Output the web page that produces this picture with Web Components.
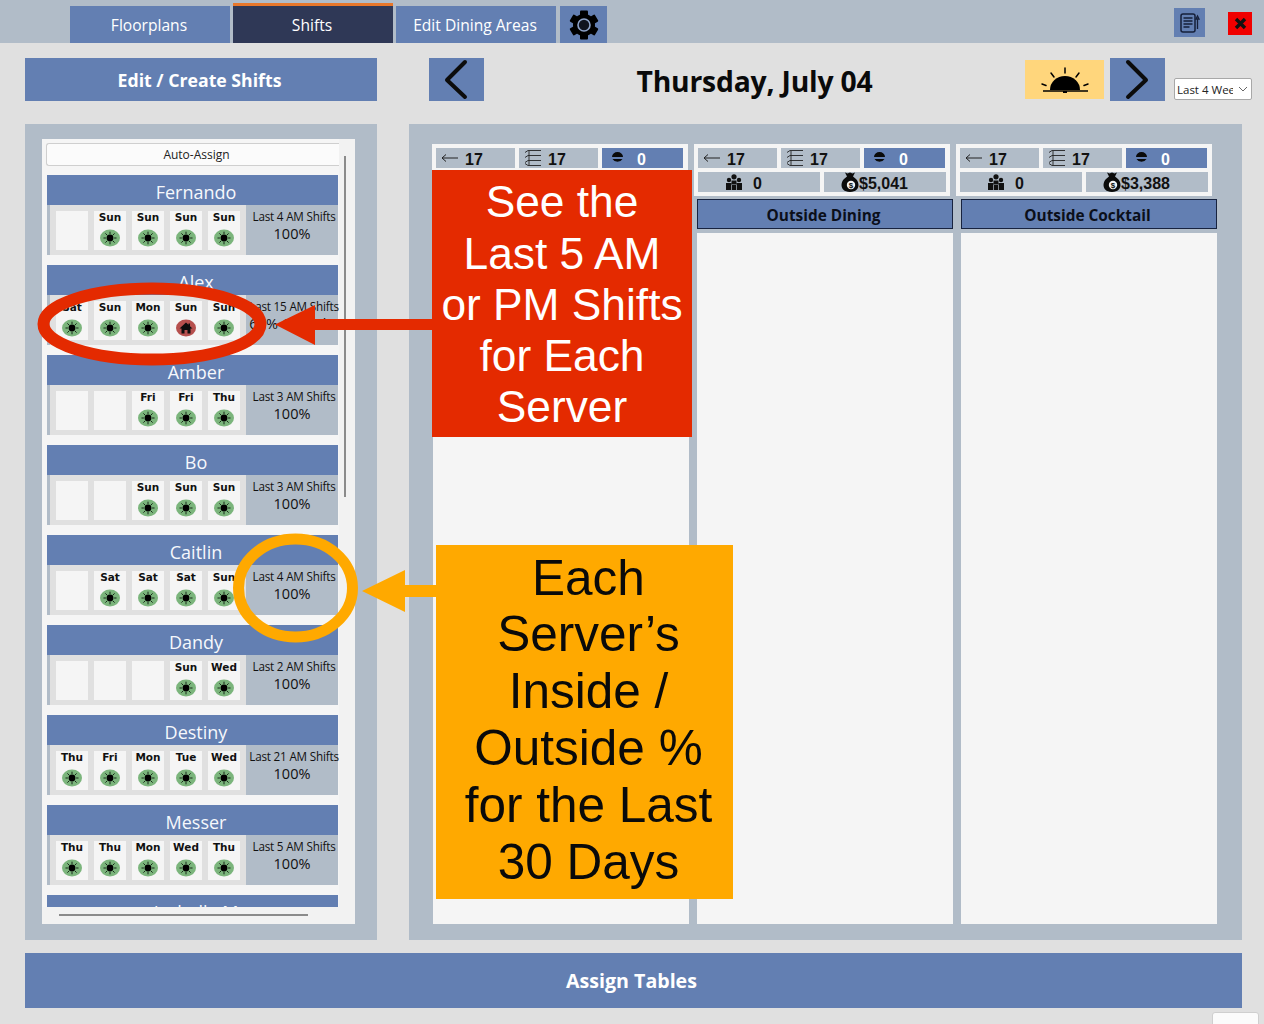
<!DOCTYPE html>
<html>
<head>
<meta charset="utf-8">
<title>Shifts</title>
<style>
  html, body { margin: 0; height: 1024px; overflow: hidden; }
  body { position: relative; background: #e0e0e0; font-family: "Open Sans", "Liberation Sans", sans-serif; }
</style>
</head>
<body>
<top-nav>
  <nav-tab>Floorplans</nav-tab>
  <nav-tab active>Shifts</nav-tab>
  <nav-tab>Edit Dining Areas</nav-tab>
  <gear-button></gear-button>
</top-nav>
<date-toolbar title-text="Thursday, July 04" range="Last 4 Weeks"></date-toolbar>
<main-area>
  <server-panel slot="left"></server-panel>
  <floor-panel slot="right"></floor-panel>
</main-area>
<assign-bar>Assign Tables</assign-bar>
<corner-tab></corner-tab>

<annotation-overlay></annotation-overlay>
<note-callout kind="red">See the<br>Last 5 AM<br>or PM Shifts<br>for Each<br>Server</note-callout>
<note-callout kind="orange">Each<br>Server’s<br>Inside /<br>Outside %<br>for the Last<br>30 Days</note-callout>

<script>
const BLUE = '#637fb2';
const GREY = '#b1bcc8';

class TopNav extends HTMLElement {
  connectedCallback() {
    this.attachShadow({ mode: 'open' });
    this.shadowRoot.innerHTML = `
      <style>
        :host { display: flex; height: 43px; box-sizing: border-box; background: ${GREY}; padding: 0 12px 0 70px; align-items: flex-end; }
        .tabs { display: flex; gap: 3px; align-items: flex-end; }
        .right { margin-left: auto; display: flex; align-items: flex-start; gap: 23px; align-self: flex-start; padding-top: 8px; }
        .note { width: 31px; height: 29px; background: ${BLUE}; display: flex; align-items: center; justify-content: center; }
        .close { width: 24px; height: 23px; margin-top: 4px; background: #f00000; display: flex; align-items: center; justify-content: center; }
      </style>
      <div class="tabs"><slot></slot></div>
      <div class="right">
        <div class="note">
          <svg width="22" height="22" viewBox="0 0 22 22" fill="none" stroke="#16203a" stroke-width="1.5">
            <rect x="2" y="2" width="14" height="18" rx="2"/>
            <path d="M4.500 6h9M4.500 9h9M4.500 12h9M4.500 15h6"/>
            <path d="M18.500 7v10M17 7l1.500-3 1.500 3z" stroke-width="1.300"/>
          </svg>
        </div>
        <div class="close">
          <svg width="13" height="13" viewBox="0 0 13 13"><path d="M2 2l9 9M11 2l-9 9" stroke="#111" stroke-width="3.400"/></svg>
        </div>
      </div>`;
  }
}

class NavTab extends HTMLElement {
  connectedCallback() {
    this.attachShadow({ mode: 'open' });
    this.shadowRoot.innerHTML = `
      <style>
        :host { display: flex; width: 160px; height: 37px; padding-right: 2px; background: ${BLUE}; color: #fff; font-size: 15.600px; align-items: center; justify-content: center; box-sizing: border-box; }
        :host([active]) { height: 40px; background: #2f3856; border-top: 3px solid #e8772a; }
      </style>
      <slot></slot>`;
  }
}

class GearButton extends HTMLElement {
  connectedCallback() {
    this.attachShadow({ mode: 'open' });
    this.shadowRoot.innerHTML = `
      <style>
        :host { display: flex; width: 47px; height: 37px; margin-left: 1px; background: ${BLUE}; align-items: center; justify-content: center; }
      </style>
      <svg width="30" height="30" viewBox="-15 -15 30 30">
        <circle r="11"/>
        <g>
          <rect x="-4" y="-14.500" width="8" height="29" rx="1"/>
          <rect x="-4" y="-14.500" width="8" height="29" rx="1" transform="rotate(60)"/>
          <rect x="-4" y="-14.500" width="8" height="29" rx="1" transform="rotate(120)"/>
        </g>
        <circle r="6" fill="#10141f" stroke="#8ea3c8" stroke-width="1.600"/>
      </svg>`;
  }
}

class DateToolbar extends HTMLElement {
  connectedCallback() {
    this.attachShadow({ mode: 'open' });
    this.shadowRoot.innerHTML = `
      <style>
        :host { display: flex; height: 43px; margin-top: 15px; padding: 0 12px 0 25px; align-items: stretch; }
        .edit { width: 352px; box-sizing: border-box; padding-right: 3px; background: ${BLUE}; color: #fff; font-weight: 700; font-size: 17.700px; display: flex; align-items: center; justify-content: center; margin-right: 52px; }
        .nav { width: 55px; background: ${BLUE}; display: block; }
        h1 { flex: 1; margin: 0; font-size: 28.300px; font-weight: 700; color: #0a0a0a; text-align: center; line-height: 47px; letter-spacing: -0.200px; }
        .sun { width: 79px; height: 39px; margin: 2px 6px 0 0; background: #ffd67c; display: block; }
        .range { width: 78px; height: 22px; margin: 20px 0 0 9px; box-sizing: border-box; background: #fff; border: 1px solid #a8a8a8; border-radius: 2px; font-size: 11.500px; color: #222; display: flex; align-items: center; padding-left: 2px; }
        .range span { width: 56px; overflow: hidden; white-space: nowrap; }
        .range svg { margin-left: 5px; }
      </style>
      <div class="edit">Edit / Create Shifts</div>
      <svg class="nav" viewBox="0 0 55 43"><path d="M36 4L18 22l18 17" fill="none" stroke="#0c0c0c" stroke-width="4" stroke-linecap="round" stroke-linejoin="round"/></svg>
      <h1>${this.getAttribute('title-text')}</h1>
      <svg class="sun" viewBox="0 0 79 39">
        <path d="M25 30a15 14 0 0 1 30 0z" fill="#000"/>
        <path d="M18 31h45" stroke="#000" stroke-width="1.500"/>
        <path d="M38 31h4v2h-4z" fill="#000"/>
        <path d="M40 8v5M26 13l3 4M54 13l-3 4M17 24l4 1.500M63 24l-4 1.500" stroke="#000" stroke-width="1.500" stroke-linecap="round"/>
      </svg>
      <svg class="nav" viewBox="0 0 55 43"><path d="M18 4l18 18-18 17" fill="none" stroke="#0c0c0c" stroke-width="4" stroke-linecap="round" stroke-linejoin="round"/></svg>
      <div class="range"><span>${this.getAttribute('range')}</span>
        <svg width="10" height="6" viewBox="0 0 10 6"><path d="M1 1l4 4 4-4" fill="none" stroke="#666"/></svg>
      </div>`;
  }
}

class MainArea extends HTMLElement {
  connectedCallback() {
    this.attachShadow({ mode: 'open' });
    this.shadowRoot.innerHTML = `
      <style>
        :host { display: flex; gap: 32px; height: 816px; margin: 23px 22px 0 25px; }
        ::slotted([slot="left"]) { width: 352px; }
        ::slotted([slot="right"]) { flex: 1; }
      </style>
      <slot name="left"></slot>
      <slot name="right"></slot>`;
  }
}

const SERVERS = [
  ['Fernando', ['', 'Sun', 'Sun', 'Sun', 'Sun'], 'Last 4 AM Shifts', '100%'],
  ['Alex', ['Sat', 'Sun', 'Mon', 'Sun!', 'Sun'], 'Last 15 AM Shifts', '67% Outside'],
  ['Amber', ['', '', 'Fri', 'Fri', 'Thu'], 'Last 3 AM Shifts', '100%'],
  ['Bo', ['', '', 'Sun', 'Sun', 'Sun'], 'Last 3 AM Shifts', '100%'],
  ['Caitlin', ['', 'Sat', 'Sat', 'Sat', 'Sun'], 'Last 4 AM Shifts', '100%'],
  ['Dandy', ['', '', '', 'Sun', 'Wed'], 'Last 2 AM Shifts', '100%'],
  ['Destiny', ['Thu', 'Fri', 'Mon', 'Tue', 'Wed'], 'Last 21 AM Shifts', '100%'],
  ['Messer', ['Thu', 'Thu', 'Mon', 'Wed', 'Thu'], 'Last 5 AM Shifts', '100%'],
  ['Isabella M', ['', '', '', '', ''], '', '']
];

class ServerPanel extends HTMLElement {
  connectedCallback() {
    this.attachShadow({ mode: 'open' });
    const cards = SERVERS.map(s =>
      `<server-card name="${s[0]}" days="${s[1].join(',')}" label="${s[2]}" pct="${s[3]}"></server-card>`).join('');
    this.shadowRoot.innerHTML = `
      <style>
        :host { display: block; background: ${GREY}; padding: 15px 22px 16px 17px; box-sizing: border-box; }
        .frame { height: 785px; background: #f2f2f2; display: grid; grid-template-columns: 297px 16px; grid-template-rows: 768px 17px; }
        .list { background: #f5f5f5; overflow: hidden; padding: 4px 0 0 5px; box-sizing: border-box; }
        .auto { height: 23px; box-sizing: border-box; margin: 0 -2px 9px -1px; padding-left: 5px; background: #fbfbfb; border: 1px solid #cfcfcf; border-right: none; border-radius: 3px; font-size: 12px; color: #222; display: flex; align-items: center; justify-content: center; }
        .vbar { padding: 17px 0 0 5px; }
        .vbar div { width: 2px; height: 341px; background: #8b8b8b; }
        .hbar { padding: 7px 0 0 17px; }
        .hbar div { width: 249px; height: 2px; background: #8b8b8b; }
      </style>
      <div class="frame">
        <div class="list">
          <div class="auto">Auto-Assign</div>
          ${cards}
        </div>
        <div class="vbar"><div></div></div>
        <div class="hbar"><div></div></div>
      </div>`;
  }
}

class ServerCard extends HTMLElement {
  connectedCallback() {
    this.attachShadow({ mode: 'open' });
    const days = this.getAttribute('days').split(',');
    this.shadowRoot.innerHTML = `
      <style>
        :host { display: block; width: 291px; margin-bottom: 10px; }
        .name { height: 30px; padding-left: 7px; box-sizing: border-box; background: ${BLUE}; color: #f6f8fc; font-size: 18px; line-height: 34px; text-align: center; }
        .body { display: flex; height: 50px; border-left: 3px solid ${GREY}; background: #e0e0e0; }
        .days { width: 196px; display: flex; gap: 6px; padding: 6px 0 0 6px; box-sizing: border-box; }
        .stats { width: 92px; background: ${GREY}; color: #111; display: flex; flex-direction: column; align-items: center; white-space: nowrap; }
        .label { font-size: 11.700px; line-height: 14px; margin: 4px 0 0 4px; letter-spacing: -0.200px; }
        .pct { font-size: 14.500px; line-height: 18px; margin-top: 2px; }
      </style>
      <div class="name">${this.getAttribute('name')}</div>
      <div class="body">
        <div class="days">${days.map(d => `<shift-chip day="${d}"></shift-chip>`).join('')}</div>
        <div class="stats"><span class="label">${this.getAttribute('label')}</span><span class="pct">${this.getAttribute('pct')}</span></div>
      </div>`;
  }
}

// "Sun!" marks a shift worked inside, drawn with the red house dot
class ShiftChip extends HTMLElement {
  connectedCallback() {
    this.attachShadow({ mode: 'open' });
    const raw = this.getAttribute('day');
    const inside = raw.endsWith('!');
    const day = raw.replace('!', '');
    let icon = '';
    if (day && inside) {
      icon = `<svg width="20" height="18" viewBox="0 0 20 18">
        <ellipse cx="10" cy="9" rx="10" ry="8.500" fill="#b6504e"/>
        <path d="M10 3.500L3.500 9.500H5.500V14.500H8.500V11H11.500V14.500H14.500V9.500H16.500L14 7.200V4.500H12.500V5.800z" fill="#0d0d0d"/>
      </svg>`;
    } else if (day) {
      icon = `<svg width="20" height="18" viewBox="0 0 20 18">
        <ellipse cx="10" cy="9" rx="10" ry="8.500" fill="#7bb57c"/>
        <circle cx="10" cy="9" r="3.400" fill="#000"/>
        <path d="M10 2.700v2.400M10 12.900v2.400M3.500 9h2.400M14.100 9h2.400M5.400 4.400l1.800 1.800M12.800 11.800l1.800 1.800M14.600 4.400l-1.800 1.800M7.200 11.800l-1.800 1.800" stroke="#0c1a0d" stroke-width="0.900"/>
      </svg>`;
    }
    this.shadowRoot.innerHTML = `
      <style>
        :host { display: flex; flex-direction: column; align-items: center; width: 32px; height: 39px; background: #f5f5f5; }
        span { font: 700 10.500px/13px "DejaVu Sans", sans-serif; color: #111; height: 13px; }
        svg { margin-top: 5px; }
      </style>
      <span>${day}</span>${icon}`;
  }
}

class FloorPanel extends HTMLElement {
  connectedCallback() {
    this.attachShadow({ mode: 'open' });
    this.shadowRoot.innerHTML = `
      <style>
        :host { display: flex; gap: 8px; background: ${GREY}; padding: 20px 0 16px 24px; box-sizing: border-box; }
      </style>
      <dining-column shift="-1"></dining-column>
      <dining-column shift="-3" name="Outside Dining" sales="$5,041"></dining-column>
      <dining-column shift="-5" name="Outside Cocktail" sales="$3,388"></dining-column>`;
  }
}

class DiningColumn extends HTMLElement {
  connectedCallback() {
    this.attachShadow({ mode: 'open' });
    const name = this.getAttribute('name');
    const sales = this.getAttribute('sales');
    const arrow = `<svg width="18" height="10" viewBox="0 0 18 10"><path d="M17 5H1M5 1.500L1 5l4 3.500" fill="none" stroke="#222" stroke-width="1"/></svg>`;
    const list = `<svg width="18" height="18" viewBox="0 0 18 18" fill="none" stroke="#222" stroke-width="0.900"><path d="M5 2v14M4 1.500h13M4 6.500h13M4 11.500h13M4 16.500h13M1 3.500l3-2M1 8.500l3-2M1 13.500l3-2M1 14.500l3 2"/></svg>`;
    const disc = `<svg width="13" height="12" viewBox="0 0 13 12"><path d="M1 5a5.500 5 0 0 1 11 0zM1.500 7h10a5.500 4.500 0 0 1-10 0z" fill="#0a0a0a"/></svg>`;
    const people = `<svg width="18" height="17" viewBox="0 0 18 17" fill="#111"><circle cx="9" cy="2.800" r="2.600"/><circle cx="4" cy="6" r="2.200"/><circle cx="14" cy="6" r="2.200"/><path d="M6.500 6.500h5v4h-5zM1 9h5.300v7H1zM11.700 9H17v7h-5.300zM7 11h4v5H7z"/></svg>`;
    const bag = `<svg width="18" height="20" viewBox="0 0 18 20"><path d="M4 0.500l2.500 1 2.500-1 2.500 1 2.500-1-2 4 3 2.500c4 4 4 13-6 13S-1 11 3 7l3-2.500z" fill="#0b0b0b"/><circle cx="10" cy="13" r="4.200" fill="#f2f2f2"/><text x="10" y="16" font-size="8" font-weight="700" text-anchor="middle" font-family="Liberation Sans" fill="#0b0b0b">$</text></svg>`;
    this.shadowRoot.innerHTML = `
      <style>
        :host { display: flex; flex-direction: column; width: 256px; }
        .box { width: 256px; height: 52px; box-sizing: border-box; background: #f5f5f5; padding: 4px; margin-left: ${this.getAttribute('shift')}px; display: flex; flex-direction: column; gap: 4px; }
        .row { display: flex; gap: 4px; height: 20px; }
        .cell { background: ${GREY}; display: flex; align-items: center; box-sizing: border-box; font: 700 16px "Liberation Sans", sans-serif; color: #111; }
        .cell span { margin-top: 4px; }
        .a { width: 79px; padding-left: 5px; gap: 6px; }
        .b { width: 79px; padding-left: 5px; gap: 6px; }
        .c { width: 81px; background: ${BLUE}; color: #fff; padding-left: 9px; gap: 13px; }
        .d { width: 122px; padding-left: 27px; gap: 10px; }
        .e { width: 122px; padding-left: 17px; }
        .head { height: 30px; margin-top: 3px; padding: 2px 3px 0 0; box-sizing: border-box; border: 1px solid #18233f; background: ${BLUE}; color: #0b0f1a; font-size: 15.400px; font-weight: 700; display: flex; align-items: center; justify-content: center; }
        .surface { height: 691px; margin-top: 4px; background: #f5f5f5; }
      </style>
      <div class="box">
        <div class="row">
          <div class="cell a">${arrow}<span>17</span></div>
          <div class="cell b">${list}<span>17</span></div>
          <div class="cell c">${disc}<span>0</span></div>
        </div>
        ${name ? `<div class="row">
          <div class="cell d">${people}<span>0</span></div>
          <div class="cell e">${bag}<span>${sales}</span></div>
        </div>` : ''}
      </div>
      ${name ? `<div class="head">${name}</div>` : '<div class="head"></div>'}
      <div class="surface"></div>`;
  }
}

class AssignBar extends HTMLElement {
  connectedCallback() {
    this.attachShadow({ mode: 'open' });
    this.shadowRoot.innerHTML = `
      <style>
        :host { display: flex; height: 55px; margin: 13px 22px 0 25px; padding-right: 4px; background: ${BLUE}; color: #fff; font-size: 19.600px; font-weight: 700; align-items: center; justify-content: center; }
      </style>
      <slot></slot>`;
  }
}

class CornerTab extends HTMLElement {
  connectedCallback() {
    this.attachShadow({ mode: 'open' });
    this.shadowRoot.innerHTML = `
      <style>
        :host { display: block; width: 47px; height: 30px; margin: 4px 0 0 1212px; box-sizing: border-box; background: #fbfbfb; border: 1px solid #cfcfcf; border-radius: 3px; }
      </style>`;
  }
}

// the red and orange marks were drawn on top of the screenshot, so they float over the page
class AnnotationOverlay extends HTMLElement {
  connectedCallback() {
    this.attachShadow({ mode: 'open' });
    this.shadowRoot.innerHTML = `
      <style>
        :host { position: absolute; left: 0; top: 0; width: 1264px; height: 1024px; pointer-events: none; }
        svg { display: block; }
      </style>
      <svg width="1264" height="1024" viewBox="0 0 1264 1024">
        <ellipse cx="152" cy="324" rx="108.500" ry="35.500" fill="none" stroke="#e42a00" stroke-width="12"/>
        <path d="M433 319H315V305L275 324.500 315 345V330H433z" fill="#e42a00"/>
        <ellipse cx="295.500" cy="588" rx="57" ry="49" fill="none" stroke="#ffa900" stroke-width="11"/>
        <path d="M437 585H405V570L362 591 405 612V597H437z" fill="#ffa900"/>
      </svg>`;
  }
}

class NoteCallout extends HTMLElement {
  connectedCallback() {
    this.attachShadow({ mode: 'open' });
    this.shadowRoot.innerHTML = `
      <style>
        :host { position: absolute; display: flex; align-items: center; justify-content: center; text-align: center; box-sizing: border-box; font-family: "Liberation Sans", Arial, sans-serif; }
        :host([kind="red"]) { left: 432px; top: 170px; width: 260px; height: 267px; padding-top: 2px; background: #e42a00; color: #fff; font-size: 44.300px; line-height: 51.300px; }
        :host([kind="orange"]) { left: 436px; top: 545px; width: 297px; height: 354px; padding: 0 0 4px 8px; background: #ffa900; color: #0a0a0a; font-size: 49.500px; line-height: 56.800px; }
      </style>
      <div><slot></slot></div>`;
  }
}

customElements.define('top-nav', TopNav);
customElements.define('nav-tab', NavTab);
customElements.define('gear-button', GearButton);
customElements.define('date-toolbar', DateToolbar);
customElements.define('main-area', MainArea);
customElements.define('server-panel', ServerPanel);
customElements.define('server-card', ServerCard);
customElements.define('shift-chip', ShiftChip);
customElements.define('floor-panel', FloorPanel);
customElements.define('dining-column', DiningColumn);
customElements.define('assign-bar', AssignBar);
customElements.define('corner-tab', CornerTab);
customElements.define('annotation-overlay', AnnotationOverlay);
customElements.define('note-callout', NoteCallout);
</script>
</body>
</html>
